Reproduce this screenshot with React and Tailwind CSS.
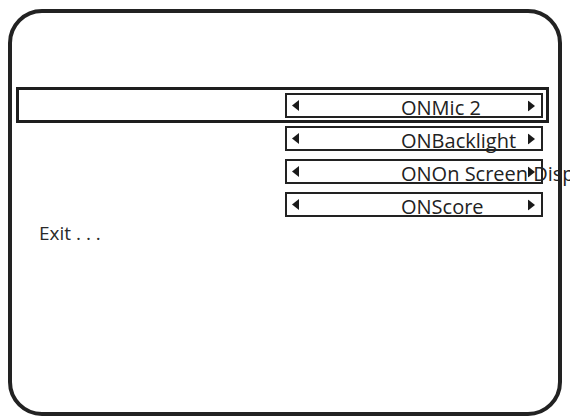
import React from "react";

const font = { fontFamily: '"Open Sans", "Noto Sans", sans-serif' };

function LeftArrow() {
  return (
    <svg width="7" height="11" viewBox="0 0 7 11" className="shrink-0">
      <polygon points="7,0 0,5.5 7,11" fill="#1a1a1a" />
    </svg>
  );
}

function RightArrow() {
  return (
    <svg
      width="7"
      height="11"
      viewBox="0 0 7 11"
      className="absolute right-[6px] top-1/2 -translate-y-1/2"
    >
      <polygon points="0,0 7,5.5 0,11" fill="#1a1a1a" />
    </svg>
  );
}

function ValueBox({ label }) {
  return (
    <div className="relative w-[258px] h-[25px] border-2 border-[#222] flex items-start pl-[5px]">
      <div className="h-[21px] flex items-center">
        <LeftArrow />
      </div>
      <span className="ml-[102px] mt-[2px] text-[20px] leading-[21px] text-[#222] whitespace-nowrap">
        {label}
      </span>
      <RightArrow />
    </div>
  );
}

export default function App() {
  const rows = ["ONBacklight", "ONOn Screen Display", "ONScore"];
  return (
    <div className="w-[570px] h-[420px] overflow-hidden bg-white pt-[9px] pl-[8px]" style={font}>
      <div className="w-[554px] h-[407px] border-4 border-[#222] rounded-[34px] flex flex-col pt-[74px] pl-[4px]">
        <div className="w-[533px] border-[3px] border-[#1e1e1e] pt-[3px] pb-[2px] pr-[3px] flex justify-end">
          <ValueBox label="ONMic 2" />
        </div>
        <div className="w-[533px] mt-[3px] flex flex-col items-end gap-2 pr-[6px]">
          {rows.map((r) => (
            <ValueBox key={r} label={r} />
          ))}
        </div>
        <div className="ml-[23px] mt-[6px] text-[19px] leading-[20px] text-[#2a2a2a]">
          Exit . . .
        </div>
      </div>
    </div>
  );
}
